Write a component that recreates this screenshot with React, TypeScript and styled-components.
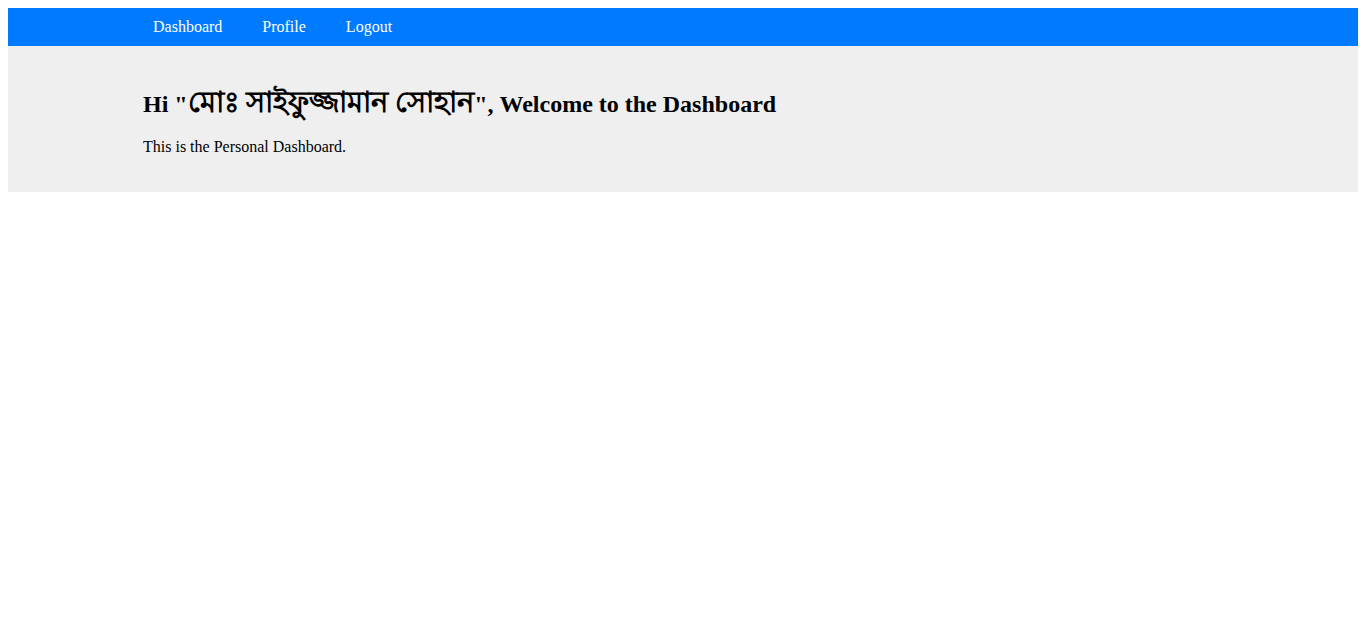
import React from 'react'
import styled, { createGlobalStyle } from 'styled-components'

const GlobalStyle = createGlobalStyle`
  body {
    margin: 8px;
    font-family: "Liberation Serif", "Times New Roman", serif;
    background: #ffffff;
    color: #000000;
  }
`

const NavBar = styled.nav`
  background: #007bff;
`

const Container = styled.div`
  max-width: 1080px;
  margin: 0 auto;
`

const NavList = styled.div`
  display: flex;
  gap: 20px;
`

const NavLink = styled.a`
  display: block;
  padding: 10px;
  color: #ffffff;
  text-decoration: none;
  font-size: 16px;
  line-height: 18px;
`

const Hero = styled.section`
  background: #efefef;
  padding: 20px 0;
`

const Title = styled.h2`
  font-size: 24px;
  font-weight: bold;
  line-height: 32px;
  height: 32px;
  margin: 22px 0 18px;
`

// bengali glyphs render wider in the original font
const Bangla = styled.span`
  font-size: 29px;
  font-weight: bold;
  line-height: 0;
`

const Text = styled.p`
  font-size: 16px;
  line-height: 18px;
  margin: 18px 0 16px;
`

const App: React.FC = () => {
  const links = ['Dashboard', 'Profile', 'Logout']
  return (
    <>
      <GlobalStyle />
      <NavBar>
        <Container>
          <NavList>
            {links.map((link) => (
              <NavLink key={link} href="#">
                {link}
              </NavLink>
            ))}
          </NavList>
        </Container>
      </NavBar>
      <Hero>
        <Container>
          <Title>
            Hi "<Bangla>মোঃ সাইফুজ্জামান সোহান</Bangla>", Welcome to the Dashboard
          </Title>
          <Text>This is the Personal Dashboard.</Text>
        </Container>
      </Hero>
    </>
  )
}

export default App
